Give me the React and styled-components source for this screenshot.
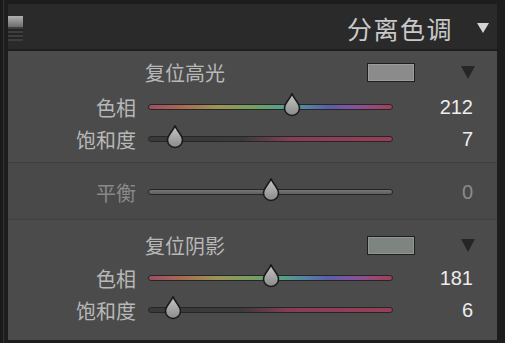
import React from 'react';
import styled, { createGlobalStyle } from 'styled-components';

const GlobalStyle = createGlobalStyle`
  body {
    margin: 0;
    background: #1d1d1d;
  }
`

const CJK = `"Noto Sans CJK SC", "Noto Sans", sans-serif`;

const Frame = styled.div`
  width: 505px;
  height: 343px;
  box-sizing: border-box;
  padding: 4px 8px 3px 8px;
  background: #1d1d1d;
  display: flex;
  flex-direction: column;
  gap: 2px;
  box-shadow: inset 3px 0 0 #1a1a1a, inset 4px 0 0 #333;
  overflow: hidden;
`

const Header = styled.div`
  height: 45px;
  flex: none;
  background: #2a2a2a;
  display: flex;
  align-items: center;
  padding-right: 4px;
`

const Toggle = styled.div`
  width: 15px;
  height: 25px;
  margin-top: 4px;
  display: flex;
  flex-direction: column;
`

const ToggleTop = styled.div`
  height: 11px;
  background: linear-gradient(#b0b0b0, #6c6c6c);
`

const ToggleBottom = styled.div`
  flex: 1;
  background: repeating-linear-gradient(#3e3e3e 0 2px, #252525 2px 4px);
`

const Title = styled.div`
  margin-left: auto;
  font-family: ${CJK};
  font-size: 25px;
  color: #c9c9c9;
  letter-spacing: 1.5px;
  margin-top: 2px;
`

const HeaderArrow = styled.div`
  width: 0;
  height: 0;
  margin: 2px 4px 0 24px;
  border-left: 6px solid transparent;
  border-right: 6px solid transparent;
  border-top: 10px solid #d4d4d4;
`

const Panel = styled.div`
  flex: 1;
  background: #4b4b4b;
  display: flex;
  flex-direction: column;
`

const Section = styled.div`
  padding: ${p => p.$pad};
  background: ${p => p.$bg || 'transparent'};
  border-top: ${p => (p.$lined ? '1px solid #3f3f3f' : 'none')};
  border-bottom: ${p => (p.$lined ? '1px solid #3f3f3f' : 'none')};
`

const HeadRow = styled.div`
  height: 34px;
  margin-bottom: ${p => p.$gap}px;
  display: grid;
  grid-template-columns: 137px 222px 48px 1fr;
  align-items: center;
`

const HeadTitle = styled.div`
  grid-column: 2;
  font-family: ${CJK};
  font-size: 20px;
  color: #b8b8b8;
`

const Swatch = styled.div`
  width: 48px;
  height: 19px;
  box-sizing: border-box;
  background: ${p => p.$color};
  border: 1px solid #1f1f1f;
  box-shadow: inset 0 0 0 1px rgba(255, 255, 255, 0.15);
`

const Caret = styled.div`
  justify-self: end;
  margin-right: 22px;
  width: 0;
  height: 0;
  border-left: 7px solid transparent;
  border-right: 7px solid transparent;
  border-top: 13px solid #262626;
`

const Row = styled.div`
  height: 32px;
  display: grid;
  grid-template-columns: 140px 245px 80px;
  align-items: center;
`

const Label = styled.div`
  justify-self: end;
  margin-right: 12px;
  font-family: ${CJK};
  font-size: 20px;
  color: ${p => (p.$dim ? '#8a8a8a' : '#b8b8b8')};
`

const Track = styled.div`
  position: relative;
  height: 6px;
  box-sizing: border-box;
  border: 1px solid #262626;
  border-radius: 3px;
  background: ${p => p.$fill};
`

const Thumb = styled.svg`
  position: absolute;
  top: -13px;
  width: 18px;
  height: 25px;
  margin-left: -9px;
`

const Value = styled.div`
  justify-self: end;
  font-family: "Liberation Sans", Arial, sans-serif;
  font-size: 20px;
  color: ${p => (p.$dim ? '#8c8c8c' : '#ededed')};
`

const HUE = 'linear-gradient(to right, #a04c66 0%, #a66c50 14%, #9c9456 28%, #76a05e 42%, #55a08a 55%, #5584a2 64%, #5a5ea8 74%, #8652a0 84%, #9c4670 94%, #a03e5a 100%)';
const SAT = 'linear-gradient(to right, #3a3a3a 0%, #3c3a3b 38%, #883d55 58%, #983f58 100%)';
const GRAY = 'linear-gradient(#777, #5e5e5e)';

function Slider({ label, value, pos, fill, dim }) {
  return (
    <Row>
      <Label $dim={dim}>{label}</Label>
      <Track $fill={fill}>
        <Thumb viewBox="0 0 18 25" style={{ left: `${pos * 100}%` }}>
          <defs>
            <linearGradient id="tg" x1="0" y1="0" x2="0" y2="1">
              <stop offset="0" stopColor="#c8c8c8" />
              <stop offset="1" stopColor="#8a8a8a" />
            </linearGradient>
          </defs>
          <path
            d="M9 1.5 C10 6 16.5 10.5 16.5 16 A7.5 7.5 0 0 1 1.5 16 C1.5 10.5 8 6 9 1.5 Z"
            fill="url(#tg)"
            stroke="#1a1a1a"
            strokeWidth="1.6"
          />
        </Thumb>
      </Track>
      <Value $dim={dim}>{value}</Value>
    </Row>
  );
}

function Group({ title, swatch, gap, hue, sat, pad }) {
  return (
    <Section $pad={pad}>
      <HeadRow $gap={gap}>
        <HeadTitle>{title}</HeadTitle>
        <Swatch $color={swatch} />
        <Caret />
      </HeadRow>
      <Slider label="色相" value={hue} pos={hue / 360} fill={HUE} />
      <Slider label="饱和度" value={sat} pos={0.07 + sat / 200} fill={SAT} />
    </Section>
  );
}

export default function App() {
  return (
    <>
      <GlobalStyle />
      <Frame>
        <Header>
          <Toggle>
            <ToggleTop />
            <ToggleBottom />
          </Toggle>
          <Title>分离色调</Title>
          <HeaderArrow />
        </Header>
        <Panel>
          <Group title="复位高光" swatch="#8b8b8b" gap={2} hue={212} sat={7} pad="4px 0 7px" />
          <Section $pad="13px 0 11px" $bg="#494949" $lined>
            <Slider label="平衡" value={0} pos={0.5} fill={GRAY} dim />
          </Section>
          <Group title="复位阴影" swatch="#7e8480" gap={0} hue={181} sat={6} pad="8px 0 12px" />
        </Panel>
      </Frame>
    </>
  );
}
